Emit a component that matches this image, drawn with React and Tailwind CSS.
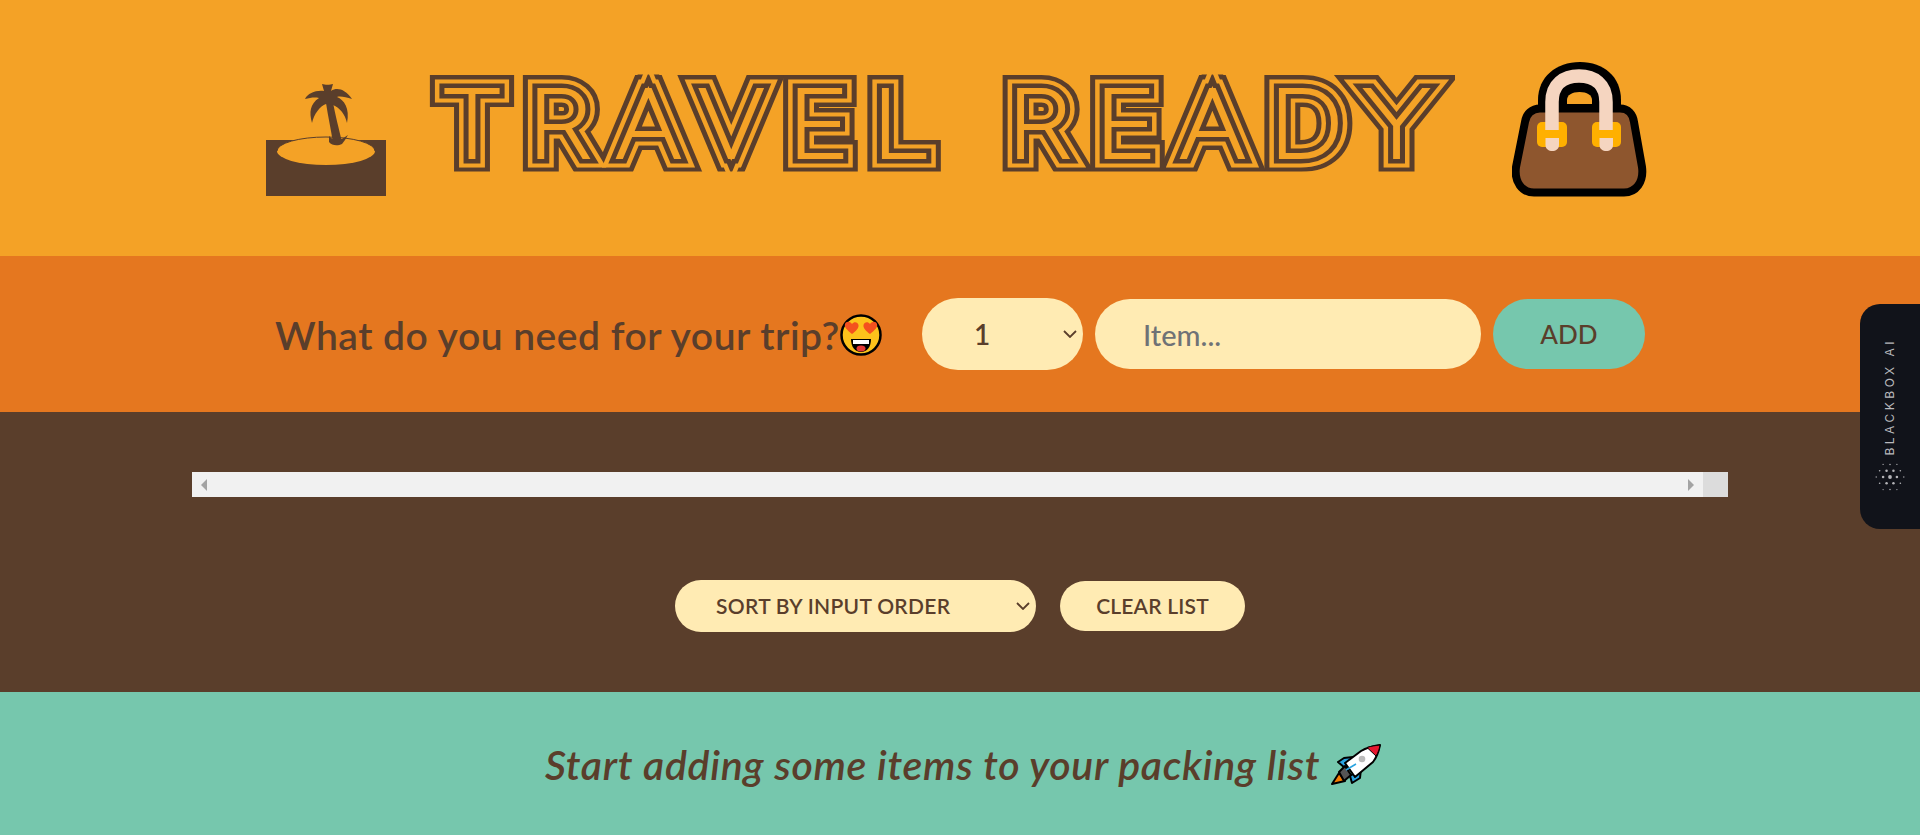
function Island() {
  return (
    <svg viewBox="0 0 120 112" className="w-[120px] h-[112px] shrink-0 mt-[24px]">
      <rect x="0" y="56" width="120" height="56" fill="#5a3e2b" />
      <ellipse cx="60" cy="67" rx="49" ry="14" fill="#f4a226" />
      <path d="M11 67 A49 14 0 0 1 109 67" fill="none" stroke="#5a3e2b" strokeWidth="1" />
      <g fill="#5a3e2b">
        <path d="M60 19 L67 18 C69 30 73 45 76 58 L67 59 C65 46 62 32 60 19 Z" />
        <path d="M63 52 C66 55 67 55 68 55 L76 55 L82 51 L79 56 L76 60 C72 62 66 62 63 58 Z" />
        <path d="M56 0 C59 1 64 1 67 0 L65 7 C71 3 79 5 86 15 C80 13 74 12 71 13 C78 16 84 24 81 39 C79 30 74 24 67 21 L60 20 C54 22 48 30 46 39 C43 28 44 20 53 14 C48 13 44 14 39 15 C42 9 50 6 58 7 Z" />
      </g>
    </svg>
  )
}

function Bag() {
  return (
    <svg viewBox="0 0 136 136" className="w-[136px] h-[136px] shrink-0 mt-[3px]">
      <path d="M26 46 V38 C26 15 44 0 68 0 C92 0 109 15 109 38 V46 Z" fill="#000" />
      <path d="M55 42 V38 C55 33 60 30 67.5 30 C75 30 80 33 80 38 V42 Z" fill="#f4a226" />
      <path d="M28 46.5 H108 C116 46.5 121 52 122 60 L130 105 C132 120 124 130.5 112 130.5 H22 C10 130.5 2 120 4 105 L13 60 C14 52 20 46.5 28 46.5 Z" fill="#8e562e" stroke="#000" strokeWidth="8" strokeLinejoin="round" />
      <rect x="25" y="60" width="30" height="25" rx="5" fill="#ffb000" />
      <rect x="80" y="60" width="29" height="25" rx="5" fill="#ffb000" />
      <path d="M40 68 V40 C40 22 52 14 67 14 C82 14 94 22 94 40 V68" fill="none" stroke="#f5d5c0" strokeWidth="13.5" />
      <path d="M33.5 76 H47 V83 C47 91 33.5 91 33.5 83 Z" fill="#f5d5c0" />
      <path d="M87.5 76 H101 V83 C101 91 87.5 91 87.5 83 Z" fill="#f5d5c0" />
    </svg>
  )
}

function HeartEyes() {
  return (
    <svg viewBox="0 0 42 42" className="w-[42px] h-[42px] shrink-0">
      <circle cx="21" cy="21" r="19.5" fill="#fcc21b" stroke="#000" strokeWidth="2.5" />
      <path fill="#f4511e" d="M12 20 C7 16 4 13 5 10 C6 7 10 7 12 10 C14 7 18 8 18.5 11 C19 14 16 17 12 20 Z" />
      <path fill="#f4511e" d="M30 20 C26 17 23 14 23.5 11 C24 8 28 7 30 10 C32 7 36 7 37 10 C38 13 35 16 30 20 Z" />
      <path fill="#000" d="M11 25 H31 C31 33 27 38 21 38 C15 38 11 33 11 25 Z" />
      <rect x="13" y="26" width="16" height="4" fill="#fff" />
      <ellipse cx="21" cy="34.5" rx="4.5" ry="3" fill="#e53935" />
    </svg>
  )
}

function Rocket() {
  return (
    <svg viewBox="0 0 50 41" className="w-[50px] h-[41px] shrink-0">
      <path d="M1 40 L8 29 L14 37 Z" fill="#f57c00" stroke="#000" strokeWidth="2" strokeLinejoin="round" />
      <path d="M7 18 L13 14 L22 13 L14 24 Z" fill="#29a3e0" stroke="#000" strokeWidth="2" strokeLinejoin="round" />
      <path d="M21 39 L29 34 L30 25 L19 32 Z" fill="#29a3e0" stroke="#000" strokeWidth="2" strokeLinejoin="round" />
      <path d="M8 28 L14 22 L20 31 L13 37 Z" fill="#555" stroke="#000" strokeWidth="2" strokeLinejoin="round" />
      <path d="M14 19 L30 7 C35 4 42 2 49 1 C48 6 46 13 42 18 L24 33 Z" fill="#fff" stroke="#000" strokeWidth="2" strokeLinejoin="round" />
      <path d="M36 3.5 C40 2 45 1.5 49 1 C48.5 5 47 9 45 12 Z" fill="#e5172f" stroke="#000" strokeWidth="1" />
      <circle cx="31" cy="15" r="3.3" fill="#bbb" />
      <path d="M15 26 L25 20" stroke="#29a3e0" strokeWidth="1.5" />
    </svg>
  )
}

function BlackboxDots() {
  const rows = [3, 4, 5, 4, 3]
  const dots = []
  rows.forEach((count, row) => {
    for (let col = 0; col < count; col++) {
      const x = 15 + (col - (count - 1) / 2) * 6.9
      const y = 15 + (row - 2) * 6.3
      const dist = Math.hypot(x - 15, y - 15)
      const r = Math.max(0.6, 1.9 - dist * 0.09)
      dots.push(<circle key={`${row}_${col}`} cx={x} cy={y} r={r} fill="#b4b4b8" />)
    }
  })
  return (
    <svg viewBox="0 0 30 30" className="w-[30px] h-[30px]">
      {dots}
    </svg>
  )
}

function Chevron() {
  return (
    <svg viewBox="0 0 14 8" className="absolute right-[6px] top-1/2 -translate-y-1/2 w-[14px] h-[8px] pointer-events-none">
      <path d="M1 1 L7 7 L13 1" fill="none" stroke="#5a3e2b" strokeWidth="1.8" />
    </svg>
  )
}

// the reference's line font isn't installed: stacked text strokes give the parallel lines
function Title() {
  return (
    <h1
      data-t="TRAVEL READY"
      className="relative isolate w-[1020px] h-[97px] shrink-0 mb-[10px] ml-[4px] mr-[8px] [clip-path:inset(0_-60px)] scale-x-[1.12] text-center text-[92px] leading-[97px] tracking-[21.5px] whitespace-pre font-thin font-['Inter',sans-serif] before:absolute before:inset-0 before:z-0 before:text-transparent before:content-[attr(data-t)] before:[-webkit-text-stroke:30px_#5a3e2b]"
    >
      <span
        data-t="TRAVEL READY"
        className="relative z-10 block text-[#f4a226] [-webkit-text-stroke:21px_#f4a226] before:absolute before:inset-0 before:text-transparent before:content-[attr(data-t)] before:[-webkit-text-stroke:13px_#5a3e2b] after:absolute after:inset-0 after:text-[#f4a226] after:content-[attr(data-t)] after:[-webkit-text-stroke:4px_#f4a226]"
      >
        TRAVEL READY
      </span>
    </h1>
  )
}

export default function App() {
  return (
    <div className="relative h-[835px] flex flex-col overflow-hidden text-[#5a3e2b] font-['Lato',sans-serif]">
      {/* Header */}
      <header className="h-[256px] bg-[#f4a226] flex items-center justify-center gap-[47px] pr-[6px]">
        <Island />
        <Title />
        <Bag />
      </header>

      {/* Add form */}
      <form className="h-[156px] bg-[#e5771f] flex items-center justify-center">
        <h3 className="flex items-center w-[647px] pt-[2px] text-[39px] font-semibold tracking-[0.5px]">
          What do you need for your trip?
          <HeartEyes />
        </h3>
        <div className="relative">
          <select className="block appearance-none w-[161px] h-[72px] rounded-[36px] bg-[#ffebb3] pl-[52px] pr-[40px] text-[28px] font-semibold">
            <option>1</option>
          </select>
          <Chevron />
        </div>
        <input
          placeholder="Item..."
          className="ml-[12px] w-[386px] h-[70px] rounded-[35px] bg-[#ffebb3] px-[48px] text-[29px] font-medium placeholder:text-[#6f7276]"
        />
        <button type="button" className="ml-[12px] w-[152px] h-[70px] rounded-[35px] bg-[#76c7ad] text-[26px] font-medium">
          ADD
        </button>
      </form>

      {/* List */}
      <main className="h-[280px] bg-[#5a3e2b] flex flex-col items-center pt-[60px]">
        <div className="w-[1536px] h-[25px] flex bg-[#f1f1f1] shrink-0">
          <div className="flex-1 flex items-center justify-between px-[9px]">
            <span className="w-0 h-0 border-y-[6px] border-y-transparent border-r-[6px] border-r-[#a3a3a3]" />
            <span className="w-0 h-0 border-y-[6px] border-y-transparent border-l-[6px] border-l-[#a3a3a3]" />
          </div>
          <div className="w-[25px] bg-[#dcdcdc]" />
        </div>
        <div className="mt-[83px] flex items-center gap-[24px]">
          <div className="relative">
            <select className="block appearance-none w-[361px] h-[52px] rounded-[26px] bg-[#ffebb3] pl-[41px] pr-[36px] text-[21px] font-semibold tracking-[0.3px]">
              <option>SORT BY INPUT ORDER</option>
            </select>
            <Chevron />
          </div>
          <button type="button" className="w-[185px] h-[50px] rounded-[25px] bg-[#ffebb3] text-[21px] font-semibold tracking-[0.2px]">
            CLEAR LIST
          </button>
        </div>
      </main>

      {/* Stats */}
      <footer className="h-[143px] bg-[#76c7ad] flex items-center justify-center gap-[11px] pt-[2px] pl-[6px]">
        <em className="text-[41px] font-semibold tracking-[0.7px]">Start adding some items to your packing list</em>
        <Rocket />
      </footer>

      {/* Blackbox tab */}
      <aside className="absolute right-0 top-[304px] w-[60px] h-[225px] bg-[#11131a] rounded-l-[20px] flex flex-col items-center pt-[34px]">
        <span className="[writing-mode:vertical-rl] rotate-180 text-[12px] tracking-[3.5px] text-[#b9b9bd] font-['Inter',sans-serif]">
          BLACKBOX AI
        </span>
        <div className="mt-[6px]">
          <BlackboxDots />
        </div>
      </aside>
    </div>
  )
}
